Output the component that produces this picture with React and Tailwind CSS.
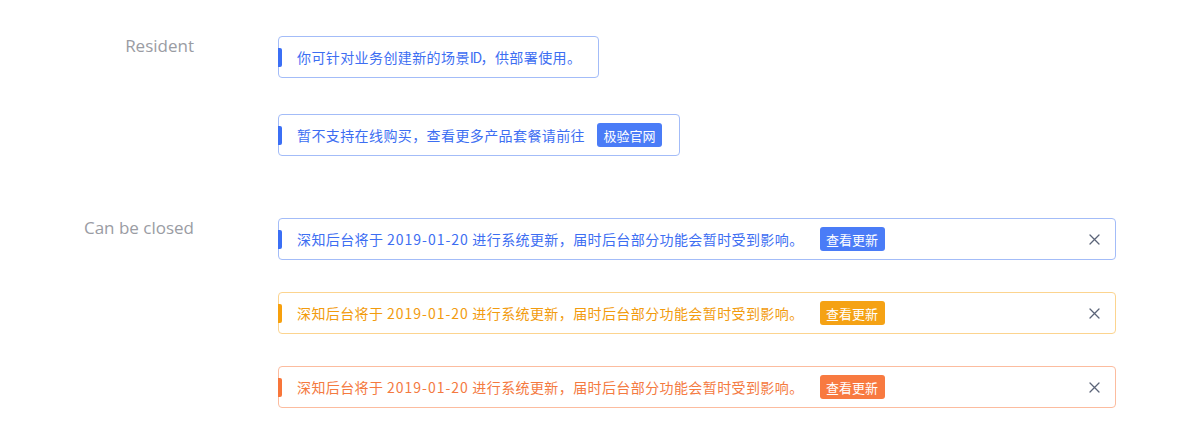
import React from "react";

const tones = {
  blue: {
    box: "border-[#a3bcf8]",
    bar: "bg-[#3b6ff5]",
    text: "text-[#3d6ef2]",
    btn: "bg-[#4a7cf7]",
  },
  amber: {
    box: "border-[#fcd48f]",
    bar: "bg-[#f7a00d]",
    text: "text-[#f29b0e]",
    btn: "bg-[#f5a214]",
  },
  orange: {
    box: "border-[#fcbc9f]",
    bar: "bg-[#f8763a]",
    text: "text-[#f47a3f]",
    btn: "bg-[#f87a40]",
  },
};

const msg = (
  <>
    深知后台将于 <span className="tracking-[1px]">2019-01-20</span> 进行系统更新，届时后台部分功能会暂时受到影响。
  </>
);

function CloseIcon() {
  return (
    <svg width="11" height="11" viewBox="0 0 11 11" fill="none" stroke="#5b6478" strokeWidth="1.3" strokeLinecap="round">
      <path d="M1 1l9 9M10 1l-9 9" />
    </svg>
  );
}

function Notice({ tone = "blue", children, action, closable, gap = "ml-3" }) {
  const t = tones[tone];
  return (
    <div
      className={`relative flex h-[42px] items-center rounded-[4px] border bg-white pl-[18px] pr-[17px] [text-spacing-trim:space-all] ${t.box} ${closable ? "w-[838px]" : "w-fit"}`}
      style={{ fontFamily: "'Noto Sans CJK SC', sans-serif" }}
    >
      <span className={`absolute left-[-1px] top-[11px] h-[19px] w-[4px] rounded-r-[2px] ${t.bar}`} />
      <p className={`text-[14px] leading-none tracking-[0.4px] ${t.text}`}>{children}</p>
      {action ? (
        <span className={`${gap} flex h-[24px] w-[65px] items-center justify-center rounded-[3px] text-[13px] leading-none text-white ${t.btn}`}>
          {action}
        </span>
      ) : null}
      {closable ? (
        <span className="ml-auto mr-[-2px] flex items-center">
          <CloseIcon />
        </span>
      ) : null}
    </div>
  );
}

function Row({ label, children }) {
  return (
    <div className="flex">
      <div
        className="w-[194px] shrink-0 text-right text-[17px] leading-[20px] text-[#9a9ca3]"
        style={{ fontFamily: "'Open Sans', sans-serif" }}
      >
        {label}
      </div>
      <div className="ml-[84px] flex flex-col gap-[36px]">{children}</div>
    </div>
  );
}

export default function App() {
  return (
    <div className="h-[444px] w-[1200px] bg-white pt-[36px]">
      <Row label="Resident">
        <Notice>
          你可针对业务创建新的场景<span className="tracking-[-1.5px]">ID</span>，供部署使用。
        </Notice>
        <Notice action="极验官网">暂不支持在线购买，查看更多产品套餐请前往</Notice>
      </Row>
      <div className="h-[62px]" />
      <Row label="Can be closed">
        <div className="flex flex-col gap-[32px]">
          <Notice tone="blue" action="查看更新" closable gap="ml-4">{msg}</Notice>
          <Notice tone="amber" action="查看更新" closable gap="ml-4">{msg}</Notice>
          <Notice tone="orange" action="查看更新" closable gap="ml-4">{msg}</Notice>
        </div>
      </Row>
    </div>
  );
}
